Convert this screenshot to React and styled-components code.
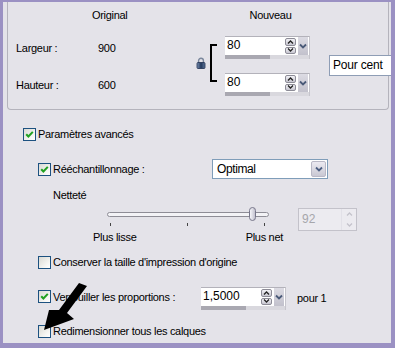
import React from 'react';
import styled, { createGlobalStyle } from 'styled-components';

const Global = createGlobalStyle`
  html, body { margin: 0; padding: 0; background: #e4e3e9; }
  body {
    font-family: "Liberation Sans", Arial, sans-serif;
    font-size: 11px;
    color: #000;
  }
`;

const Frame = styled.div`
  position: relative;
  width: 395px;
  height: 348px;
  box-sizing: border-box;
  border-style: solid;
  border-color: #9b91c3;
  border-width: 2px 4px 5px 3px;
  background: #e4e3e9;
  overflow: hidden;
  display: flex;
  flex-direction: column;
`;

const Group = styled.div`
  margin-left: 4px;
  width: 382px;
  height: 108px;
  box-sizing: border-box;
  border: 1px solid #b4b3bc;
  border-top: none;
  border-radius: 0 0 4px 4px;
  padding-left: 8px;
  display: grid;
  grid-template-columns: 76px 104px 14px 15px 85px 19px 60px;
  grid-template-rows: 34px 23px 14px 24px;
`;

const Label = styled.span`
  letter-spacing: -0.3px;
  white-space: nowrap;
  line-height: 14px;
`;

const Header = styled(Label)`
  grid-column: ${p => p.$col};
  grid-row: 1;
  padding-top: 6px;
  padding-left: ${p => p.$pl || 0}px;
  text-align: ${p => p.$align || 'left'};
`;

const Cell = styled(Label)`
  grid-column: ${p => p.$col};
  grid-row: ${p => p.$row};
  align-self: center;
  padding-left: ${p => p.$pl || 0}px;
`;

const LockCell = styled.div`
  grid-column: 3;
  grid-row: 2 / 5;
  align-self: start;
  margin-top: 21px;
  width: 10px;
  height: 12px;
`;

const Bracket = styled.div`
  grid-column: 4;
  grid-row: 2 / 5;
  align-self: start;
  margin-top: 8px;
  width: 7px;
  height: 38px;
  box-sizing: border-box;
  border: 2px solid #000;
  border-right: none;
`;

const InputCell = styled.div`
  grid-column: 5;
  grid-row: ${p => p.$row};
`;

const UnitBox = styled.div`
  grid-column: 7;
  grid-row: 2 / 5;
  align-self: start;
  margin-top: 19px;
  width: 70px;
  height: 21px;
  box-sizing: border-box;
  border: 1px solid #8e9db5;
  background: #fff;
  padding-left: 3px;
  line-height: 19px;
  font-size: 12px;
  letter-spacing: -0.2px;
`;

const Body = styled.div`
  display: flex;
  flex-direction: column;
  padding-left: 20px;
`;

const Row = styled.div`
  display: flex;
  align-items: ${p => p.$align || 'center'};
  height: ${p => p.$h}px;
  margin-top: ${p => p.$mt}px;
  margin-left: ${p => p.$indent || 0}px;
`;

const Box = styled.span`
  flex: none;
  width: 13px;
  height: 13px;
  box-sizing: border-box;
  border: 1px solid #1c5180;
  background: linear-gradient(135deg, #d9d9d3 0%, #f6f6f3 70%, #ffffff 100%);
  display: flex;
  align-items: center;
  justify-content: center;
  margin-top: ${p => p.$mt || 0}px;
`;

const CbText = styled(Label)`
  margin-left: ${p => p.$ml || 2}px;
  margin-top: ${p => p.$mt || 0}px;
  width: ${p => (p.$w ? `${p.$w}px` : 'auto')};
  flex: none;
`;

const Check = () => (
  <svg width="11" height="11" viewBox="0 0 11 11">
    <path d="M2.2 5.2 L4.4 7.5 L8.8 2.9" fill="none" stroke="#21a121" strokeWidth="2" />
  </svg>
);

const Checkbox = ({ checked, mt }) => (
  <Box $mt={mt}>{checked && <Check />}</Box>
);

const Select = styled.div`
  width: 116px;
  height: 20px;
  box-sizing: border-box;
  border: 1px solid #7f9db9;
  background: #fff;
  display: flex;
`;

const SelectText = styled.span`
  flex: 1;
  padding-left: 4px;
  line-height: 18px;
  font-size: 12px;
  letter-spacing: -0.4px;
`;

const SelectBtn = styled.span`
  width: 15px;
  margin: 1px;
  border-radius: 2px;
  background: linear-gradient(#eceaf1, #c9c8d3);
  border: 1px solid #b9b8c6;
  box-sizing: border-box;
  display: flex;
  align-items: center;
  justify-content: center;
`;

const Chevron = ({ color = '#4d5f82' }) => (
  <svg width="8" height="6" viewBox="0 0 8 6">
    <path d="M1 1.5 L4 4.5 L7 1.5" fill="none" stroke={color} strokeWidth="1.8" />
  </svg>
);

const SpinWrap = styled.div`
  width: 85px;
  display: flex;
  flex-direction: column;
  margin-top: ${p => p.$mt || 0}px;
  flex: none;
`;

const SpinTop = styled.div`
  height: 19px;
  display: flex;
  background: #fff;
  border-top: 1px solid #b3b2ba;
  border-right: 1px solid #c6c5cc;
  box-sizing: border-box;
`;

const SpinField = styled.span`
  flex: 1;
  padding-left: 2px;
  line-height: 17px;
  font-size: 12px;
`;

const SpinBtns = styled.span`
  width: 11px;
  display: flex;
  flex-direction: column;
  gap: 1px;
  padding: 1px 0;
`;

const SpinBtn = styled.span`
  flex: 1;
  border: 1px solid #8d8c97;
  border-radius: 2px;
  background: linear-gradient(#f2f2f6, #c7c6d0);
  display: flex;
  align-items: center;
  justify-content: center;
`;

const DropBtn = styled.span`
  width: 10px;
  margin: 0 1px 0 2px;
  background: linear-gradient(#dcdbe3, #c2c1cc);
  display: flex;
  align-items: center;
  justify-content: center;
`;

const Bar = styled.div`
  height: 4px;
  background: #d9d8de;
  border-right: 1px solid #c6c5cc;
  display: flex;
`;

const BarFill = styled.div`
  width: ${p => p.$fill}%;
  background: #a9a8b1;
`;

const Arrow = ({ dir, color = '#222' }) => (
  <svg width="7" height="4" viewBox="0 0 7 4">
    <path
      d={dir === 'up' ? 'M1 3.5 L3.5 1 L6 3.5' : 'M1 0.5 L3.5 3 L6 0.5'}
      fill="none"
      stroke={color}
      strokeWidth="1.3"
    />
  </svg>
);

const SpinInput = ({ value, fill, mt }) => (
  <SpinWrap $mt={mt}>
    <SpinTop>
      <SpinField>{value}</SpinField>
      <SpinBtns>
        <SpinBtn><Arrow dir="up" /></SpinBtn>
        <SpinBtn><Arrow dir="down" /></SpinBtn>
      </SpinBtns>
      <DropBtn><Chevron color="#4a5a78" /></DropBtn>
    </SpinTop>
    <Bar><BarFill $fill={fill} /></Bar>
  </SpinWrap>
);

const SliderBox = styled.div`
  width: 190px;
  display: flex;
  flex-direction: column;
  flex: none;
`;

const TrackRow = styled.div`
  position: relative;
  height: 16px;
  padding: 6px 14px 0;
  box-sizing: border-box;
`;

const Track = styled.div`
  height: 5px;
  box-sizing: border-box;
  border: 1px solid #8e8d96;
  border-radius: 3px;
  background: #f3f3f6;
`;

const Thumb = styled.div`
  position: absolute;
  left: 156px;
  top: 1px;
  width: 7px;
  height: 14px;
  box-sizing: border-box;
  border: 1px solid #77768a;
  border-radius: 4px;
  background: linear-gradient(90deg, #f6f6fa, #c3c2cf);
`;

const Ticks = styled.div`
  margin-top: 1px;
  height: 3px;
  display: flex;
  justify-content: space-between;
  padding: 0 18px 0 17px;
`;

const Tick = styled.span`
  width: 1px;
  background: #444;
`;

const SliderLabels = styled.div`
  margin-top: 4px;
  display: flex;
  justify-content: space-between;
`;

const NumBox = styled.div`
  margin-left: 15px;
  margin-top: 2px;
  width: 59px;
  height: 23px;
  box-sizing: border-box;
  border: 1px solid #c3c2ca;
  background: #ecebf0;
  display: flex;
`;

const NumText = styled.span`
  flex: 1;
  padding-left: 3px;
  line-height: 21px;
  color: #a6a6ab;
  font-size: 12px;
`;

const NumSpin = styled.span`
  width: 14px;
  display: flex;
  flex-direction: column;
  justify-content: space-around;
  align-items: center;
  border-left: 1px solid #e2e1e8;
`;

const Overlay = styled.svg`
  position: absolute;
  left: 37px;
  top: 276px;
`;

const Lock = () => (
  <svg width="10" height="12" viewBox="0 0 10 12">
    <defs>
      <linearGradient id="lk" x1="0" y1="0" x2="1" y2="0">
        <stop offset="0" stopColor="#7d93b5" />
        <stop offset="0.5" stopColor="#22385c" />
        <stop offset="1" stopColor="#5f7699" />
      </linearGradient>
    </defs>
    <path d="M2.6 6V3.6a2.4 2.4 0 0 1 4.8 0V6" fill="none" stroke="#7a879c" strokeWidth="1.4" />
    <rect x="1" y="5.5" width="8" height="6" rx="1" fill="url(#lk)" stroke="#1f3050" strokeWidth="0.8" />
  </svg>
);

export default function App() {
  return (
    <>
      <Global />
      <Frame>
        <Group>
          <Header $col={2}>Original</Header>
          <Header $col={5} $pl={6} $align="center">Nouveau</Header>
          <Cell $col={1} $row={2}>Largeur :</Cell>
          <Cell $col={2} $row={2} $pl={6}>900</Cell>
          <Cell $col={1} $row={4}>Hauteur :</Cell>
          <Cell $col={2} $row={4} $pl={6}>600</Cell>
          <LockCell><Lock /></LockCell>
          <Bracket />
          <InputCell $row={2}><SpinInput value="80" fill={54} /></InputCell>
          <InputCell $row={4}><SpinInput value="80" fill={54} /></InputCell>
          <UnitBox>Pour cent</UnitBox>
        </Group>

        <Body>
          <Row $h={20} $mt={14}>
            <Checkbox checked />
            <CbText>Paramètres avancés</CbText>
          </Row>
          <Row $h={20} $mt={15} $indent={15}>
            <Checkbox checked />
            <CbText $w={159}>Rééchantillonnage :</CbText>
            <Select>
              <SelectText>Optimal</SelectText>
              <SelectBtn><Chevron /></SelectBtn>
            </Select>
          </Row>
          <Row $h={20} $mt={6} $indent={30}>
            <Label>Netteté</Label>
          </Row>
          <Row $h={37} $mt={1} $indent={70} $align="flex-start">
            <SliderBox>
              <TrackRow>
                <Track />
                <Thumb />
              </TrackRow>
              <Ticks><Tick /><Tick /><Tick /></Ticks>
              <SliderLabels>
                <Label>Plus lisse</Label>
                <Label>Plus net</Label>
              </SliderLabels>
            </SliderBox>
            <NumBox>
              <NumText>92</NumText>
              <NumSpin>
                <Arrow dir="up" color="#c4c3cc" />
                <Arrow dir="down" color="#c4c3cc" />
              </NumSpin>
            </NumBox>
          </Row>
          <Row $h={20} $mt={9} $indent={15}>
            <Checkbox />
            <CbText>Conserver la taille d'impression d'origine</CbText>
          </Row>
          <Row $h={24} $mt={14} $indent={15} $align="flex-start">
            <Checkbox checked mt={4} />
            <CbText $w={148} $mt={4}>Verrouiller les proportions :</CbText>
            <SpinInput value="1,5000" fill={53} mt={1} />
            <CbText $mt={5} $ml={11}>pour 1</CbText>
          </Row>
          <Row $h={20} $mt={11} $indent={15}>
            <Checkbox />
            <CbText>Redimensionner tous les calques</CbText>
          </Row>
        </Body>

        <Overlay width="50" height="56" viewBox="40 278 50 56">
          <polygon
            points="79,283 87,286 67,313 74,319 44,330 49,310 59,310"
            fill="#000"
          />
        </Overlay>
      </Frame>
    </>
  );
}
